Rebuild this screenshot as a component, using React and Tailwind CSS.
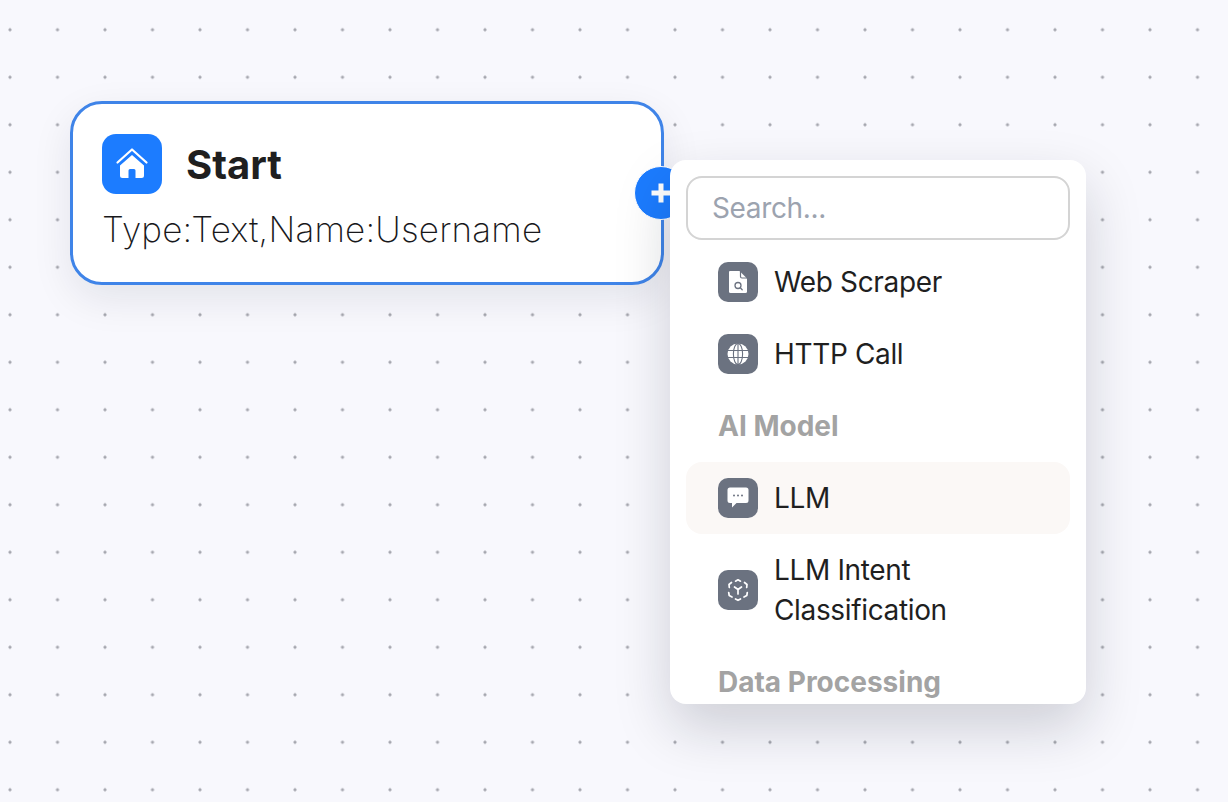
import React from 'react';

const HomeIcon = () => (
  <svg width="34" height="34" viewBox="0 0 34 34" fill="none">
    <path d="M2.500 15.500 17 2.500l14.500 13" stroke="white" strokeWidth="2.200" strokeLinecap="round" strokeLinejoin="round" />
    <path d="M5 18.500 17 8l12 10.500v10a2.500 2.500 0 0 1-2.500 2.500H20.500v-7.500a1.500 1.500 0 0 0-1.500-1.500h-4a1.500 1.500 0 0 0-1.500 1.500V31H7.500A2.500 2.500 0 0 1 5 28.500z" fill="white" />
  </svg>
);

const FileSearchIcon = () => (
  <svg width="24" height="24" viewBox="0 0 24 24" fill="none">
    <path d="M4 1h9.500L21 8.500V21.500a1.500 1.500 0 0 1-1.500 1.500h-15A1.500 1.500 0 0 1 3 21.500V2a1 1 0 0 1 1-1z" fill="white" />
    <path d="M14.500 1v5.500a1.500 1.500 0 0 0 1.500 1.500h5.500" stroke="#6b7280" strokeWidth="1.200" />
    <circle cx="12" cy="15.500" r="3" stroke="#6b7280" strokeWidth="1.300" />
    <path d="m14.300 17.800 1.900 1.900" stroke="#6b7280" strokeWidth="1.300" strokeLinecap="round" />
  </svg>
);

const GlobeIcon = () => (
  <svg width="24" height="24" viewBox="0 0 24 24" fill="none">
    <circle cx="12" cy="12" r="10.500" fill="white" />
    <ellipse cx="12" cy="12" rx="4.600" ry="10.500" stroke="#6b7280" strokeWidth="1.100" />
    <path d="M2 8.500h20M2 15.500h20M12 1.500v21" stroke="#6b7280" strokeWidth="1.100" />
  </svg>
);

const ChatIcon = () => (
  <svg width="24" height="24" viewBox="0 0 24 24" fill="none">
    <path d="M4 1.500h16A2.500 2.500 0 0 1 22.500 4v10.500a2.500 2.500 0 0 1-2.500 2.500h-9.500L6 21.500V17H4a2.500 2.500 0 0 1-2.500-2.500V4A2.500 2.500 0 0 1 4 1.500z" fill="white" />
    <circle cx="8" cy="9.500" r="1" fill="#6b7280" />
    <circle cx="12" cy="9.500" r="1" fill="#6b7280" />
    <circle cx="16" cy="9.500" r="1" fill="#6b7280" />
  </svg>
);

const IntentIcon = () => (
  <svg width="24" height="24" viewBox="0 0 24 24" fill="none" stroke="white" strokeWidth="1.700" strokeLinecap="round" strokeLinejoin="round">
    <path d="M9.500 3.200 12 1.800l2.500 1.400" />
    <path d="M18.500 4.500 21 6.500l-.3 3" />
    <path d="M21.300 14.500l-.5 3-2.800 1.500" />
    <path d="M14.500 21l-2.500 1.300L9.500 21" />
    <path d="M6 19l-2.800-1.500-.5-3" />
    <path d="M3.300 9.500 3 6.500l2.500-2" />
    <path d="m8.500 9 3.500 2.500L15.500 9M12 11.500V16" />
  </svg>
);

const Item = ({ icon, children, active }) => (
  <div className={`flex items-center gap-4 rounded-2xl px-8 py-4 text-[28px] leading-10 tracking-[-0.35px] text-[#1f1f1f] ${active ? 'bg-[#fbf8f6]' : ''}`}>
    <div className="flex h-10 w-10 shrink-0 items-center justify-center rounded-[10px] bg-[#6b7280]">{icon}</div>
    <div className="w-[272px]">{children}</div>
  </div>
);

const Heading = ({ children }) => (
  <div className="px-8 py-4 text-[28px] font-bold leading-10 text-[#a3a3a3]">{children}</div>
);

export default function App() {
  return (
    <div
      className="relative h-[802px] w-[1228px] overflow-hidden bg-[#f8f8fd] bg-[radial-gradient(circle,#a6a7af_1.2px,transparent_1.9px)] bg-[size:47.500px_47.500px] bg-[position:-13.750px_6px] font-['Inter',sans-serif]"
    >
      {/* Start node */}
      <div className="absolute left-[70px] top-[101px] h-[184px] w-[594px] rounded-[32px] border-[3px] border-[#3f84e8] bg-white px-[29px] pt-[30px] shadow-[0_14px_40px_rgba(16,24,40,0.09)]">
        <div className="flex items-center gap-6">
          <div className="flex h-[60px] w-[60px] items-center justify-center rounded-[14px] bg-[#1c7cff]">
            <HomeIcon />
          </div>
          <div className="pt-[2px] text-[40px] font-bold leading-[58px] text-[#1f1f1f]">Start</div>
        </div>
        <div className="mt-[6px] text-[35px] font-extralight leading-[58px] tracking-[0.2px] text-[#18181b]">Type:Text,Name:Username</div>

        {/* add button */}
        <div className="absolute left-[561px] top-[62px] flex h-[54px] w-[54px] items-center justify-center rounded-full border border-white bg-[#1c7cff]">
          <svg width="24" height="24" viewBox="0 0 24 24" fill="none">
            <path d="M12 2.500v19M2.500 12h19" stroke="white" strokeWidth="5" />
          </svg>
        </div>
      </div>

      {/* Node picker menu */}
      <div className="absolute left-[670px] top-[160px] h-[544px] w-[416px] overflow-hidden rounded-2xl bg-white p-4 shadow-[0_24px_56px_rgba(16,24,40,0.18)]">
        <div className="mb-[6px] flex h-16 items-center rounded-2xl border-2 border-[#d4d4d4] px-6 text-[28px] tracking-[-0.35px] text-[#9ca3af]">Search...</div>
        <Item icon={<FileSearchIcon />}>Web Scraper</Item>
        <Item icon={<GlobeIcon />}>HTTP Call</Item>
        <Heading>AI Model</Heading>
        <Item icon={<ChatIcon />} active>LLM</Item>
        <Item icon={<IntentIcon />}>LLM Intent Classification</Item>
        <Heading>Data Processing</Heading>
      </div>
    </div>
  );
}
